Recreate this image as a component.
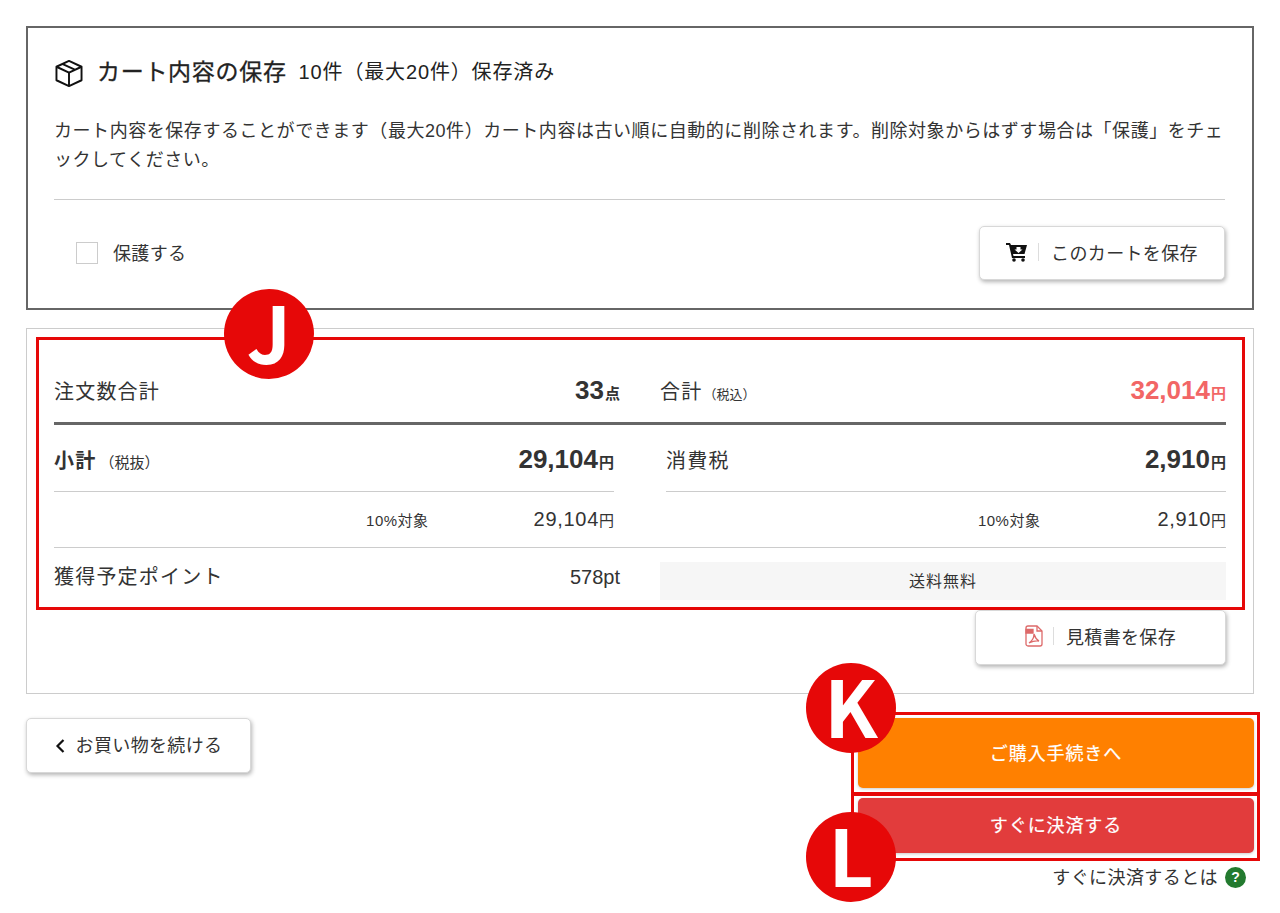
<script>
const taxRows = [
  { label: '10%対象', value: '29,104' },
  { label: '10%対象', value: '2,910' }
]
</script>

<div class="page">
  <section class="save">
    <h2 class="save-title">
      <svg class="box-icon" viewBox="1 1 28 28" fill="none" stroke="#111" stroke-width="2" stroke-linejoin="round">
        <path d="M15 2 28 8V22L15 28 2 22V8Z" />
        <path d="M2 8 15 14 28 8M15 14V28M8 5 21 11" />
      </svg>
      <span class="title-main">カート内容の保存</span>
      <span class="title-sub">10件（最大20件）保存済み</span>
    </h2>
    <p class="save-text">カート内容を保存することができます（最大20件）カート内容は古い順に自動的に削除されます。削除対象からはずす場合は「保護」をチェックしてください。</p>
    <div class="save-foot">
      <label class="protect"><span class="check"></span><span class="protect-text">保護する</span></label>
      <button class="btn btn-cart">
        <svg class="cart-icon" viewBox="0 0 22 20" fill="#111">
          <path d="M0 1H4L5 3H21L18.500 12H7L7.500 14H19V16H6L3 3H0Z" />
          <circle cx="8" cy="18" r="1.800" />
          <circle cx="17" cy="18" r="1.800" />
          <path d="M10.500 5H14.500V7.500H16.500L12.500 11 8.500 7.500H10.500Z" fill="#fff" />
        </svg>
        <span class="sep"></span>このカートを保存
      </button>
    </div>
  </section>

  <section class="summary">
    <div class="total-row">
      <div class="cell left">
        <span class="label">注文数合計</span>
        <span class="num-big">33<small>点</small></span>
      </div>
      <div class="cell right">
        <span class="label">合計<small class="note">（税込）</small></span>
        <span class="num-big pink">32,014<small>円</small></span>
      </div>
    </div>
    <div class="two-col">
      <div class="col">
        <div class="sub-row">
          <span class="label bold">小計<small class="note2">（税抜）</small></span>
          <span class="num-big">29,104<small>円</small></span>
        </div>
        <div class="tax-row">
          <span class="tax-label first">{taxRows[0].label}</span>
          <span class="tax-value">{taxRows[0].value}<small>円</small></span>
        </div>
      </div>
      <div class="col">
        <div class="sub-row">
          <span class="label">消費税</span>
          <span class="num-big">2,910<small>円</small></span>
        </div>
        <div class="tax-row">
          <span class="tax-label second">{taxRows[1].label}</span>
          <span class="tax-value">{taxRows[1].value}<small>円</small></span>
        </div>
      </div>
    </div>
    <div class="point-row">
      <div class="cell left">
        <span class="label">獲得予定ポイント</span>
        <span class="points">578pt</span>
      </div>
      <div class="free">送料無料</div>
    </div>
    <div class="quote-wrap">
      <button class="btn btn-quote">
        <svg class="pdf-icon" viewBox="0 0 18 22" fill="none" stroke="#dd6a6a" stroke-width="1.300">
          <path d="M3 1H12L17 6V19A2 2 0 0 1 15 21H3A2 2 0 0 1 1 19V3A2 2 0 0 1 3 1Z" />
          <path d="M12 1V6H17" />
          <path d="M1 4.500H8V8H1Z" fill="#dd6a6a" />
          <path d="M9 9C9 13 7 16 4 18 8 16 11 15.500 14 16 11.500 14.500 10 12.500 9 9Z" />
        </svg>
        <span class="sep"></span>見積書を保存
      </button>
    </div>
  </section>

  <div class="actions">
    <button class="btn btn-back">
      <svg class="chev" viewBox="0 0 10 16" fill="none" stroke="#111" stroke-width="2.200"><path d="M8.500 2 2.500 8l6 6" /></svg>
      お買い物を続ける
    </button>
    <div class="buy">
      <button class="buy-btn orange">ご購入手続きへ</button>
      <button class="buy-btn red">すぐに決済する</button>
      <div class="help"><span class="help-text">すぐに決済するとは</span><span class="q">?</span></div>
    </div>
  </div>

  <div class="mark-box box-j"></div>
  <div class="mark-box box-k"></div>
  <div class="mark-box box-l"></div>
  <div class="badge badge-j"><span>J</span></div>
  <div class="badge badge-k"><span>K</span></div>
  <div class="badge badge-l"><span>L</span></div>
</div>

<style>
  :global(body) {
    margin: 0;
    background: #fff;
    color: #333;
    font-family: "Liberation Sans", "Noto Sans CJK JP", sans-serif;
  }

  .page {
    position: relative;
    box-sizing: border-box;
    width: 1280px;
    height: 913px;
    padding: 26px 26px 0;
    overflow: hidden;
  }

  /* save box */
  .save {
    box-sizing: border-box;
    height: 284px;
    border: 2px solid #666;
    padding: 0 27px 0 26px;
  }
  .save-title {
    display: flex;
    align-items: center;
    margin: 0;
    padding-top: 27px;
    height: 30px;
    font-weight: 400;
    color: #222;
  }
  .box-icon {
    width: 28px;
    height: 27px;
    margin: 6px 14px 0 1px;
  }
  .title-main {
    font-size: 23px;
    letter-spacing: .7px;
    margin-right: 12px;
    -webkit-text-stroke: .3px #222;
  }
  .title-sub {
    font-size: 20px;
    letter-spacing: .85px;
  }
  .save-text {
    margin: 32px 0 0;
    font-size: 18px;
    line-height: 29px;
    letter-spacing: .55px;
    padding-bottom: 24px;
    border-bottom: 1px solid #ccc;
  }
  .save-foot {
    display: flex;
    align-items: center;
    justify-content: space-between;
    margin-top: 26px;
    height: 54px;
  }
  .protect {
    display: flex;
    align-items: center;
    margin-left: 22px;
    font-size: 18px;
    letter-spacing: .36px;
  }
  .protect-text { padding-bottom: 3px; }
  .check {
    box-sizing: border-box;
    width: 22px;
    height: 22px;
    border: 1px solid #ccc;
    margin-right: 15px;
  }

  .btn {
    display: flex;
    align-items: center;
    justify-content: center;
    box-sizing: border-box;
    background: #fff;
    border: 1px solid #d8d8d8;
    border-radius: 5px;
    box-shadow: 1px 2px 4px rgba(0, 0, 0, .3);
    color: #333;
    font-family: inherit;
    font-size: 18px;
    letter-spacing: .36px;
    padding: 0 0 3px;
  }
  .btn-cart {
    width: 246px;
    height: 54px;
  }
  .cart-icon {
    width: 22px;
    height: 20px;
  }
  .sep {
    width: 1px;
    height: 18px;
    background: #ddd;
    margin: 0 12px 0 10px;
  }

  /* summary */
  .summary {
    box-sizing: border-box;
    height: 366px;
    margin-top: 18px;
    border: 1px solid #ccc;
    padding: 0 27px;
  }
  .total-row {
    display: flex;
    justify-content: space-between;
    height: 96px;
    box-sizing: border-box;
    padding-top: 46px;
    border-bottom: 3px solid #666;
  }
  .cell {
    display: flex;
    justify-content: space-between;
    align-items: baseline;
    height: 40px;
  }
  .cell.left { width: 566px; }
  .cell.right { width: 566px; }
  .label {
    font-size: 20px;
    letter-spacing: 1.2px;
  }
  .label.bold { font-weight: 700; }
  .note {
    font-size: 13px;
    letter-spacing: 0;
    margin-left: 1px;
  }
  .note2 {
    font-size: 15px;
    font-weight: 400;
    letter-spacing: 0;
    margin-left: 3px;
  }
  .num-big {
    font-size: 26px;
    font-weight: 700;
  }
  .num-big small {
    font-size: 15px;
    margin-left: 1px;
  }
  .pink { color: #f26666; }

  .two-col {
    display: flex;
    justify-content: space-between;
    height: 122px;
    border-bottom: 1px solid #ccc;
  }
  .col { width: 560px; }
  .sub-row {
    display: flex;
    justify-content: space-between;
    align-items: baseline;
    box-sizing: border-box;
    height: 67px;
    padding-top: 19px;
    border-bottom: 1px solid #ccc;
  }
  .tax-row {
    display: flex;
    align-items: center;
    justify-content: flex-end;
    height: 55px;
    box-sizing: border-box;
  }
  .tax-label {
    font-size: 15px;
    letter-spacing: .5px;
  }
  .tax-label.first { margin-right: 105px; }
  .tax-label.second { margin-right: 117px; }
  .tax-value {
    font-size: 20px;
    letter-spacing: .7px;
  }
  .tax-value small {
    font-size: 15px;
    letter-spacing: 0;
  }

  .point-row {
    display: flex;
    justify-content: space-between;
    height: 63px;
    padding-top: 13px;
    box-sizing: border-box;
  }
  .point-row .cell { height: 30px; }
  .points { font-size: 20px; }
  .free {
    display: flex;
    align-items: center;
    justify-content: center;
    box-sizing: border-box;
    width: 566px;
    height: 38px;
    margin-top: 1px;
    padding-bottom: 3px;
    background: #f6f6f6;
    font-size: 16px;
    letter-spacing: 1px;
  }
  .quote-wrap {
    display: flex;
    justify-content: flex-end;
  }
  .btn-quote {
    width: 251px;
    height: 55px;
    margin-top: -1px;
  }
  .pdf-icon {
    width: 18px;
    height: 22px;
  }

  /* actions */
  .actions {
    display: flex;
    justify-content: space-between;
    align-items: flex-start;
    margin-top: 24px;
  }
  .btn-back {
    width: 225px;
    height: 55px;
  }
  .chev {
    width: 10px;
    height: 16px;
    margin: 3px 11px 0 0;
  }
  .buy {
    width: 396px;
    display: flex;
    flex-direction: column;
  }
  .buy-btn {
    border: 0;
    border-radius: 5px;
    color: #fff;
    font-family: inherit;
    font-size: 18px;
    letter-spacing: .9px;
    padding: 0 0 3px;
    -webkit-text-stroke: .2px #fff;
  }
  .orange {
    height: 70px;
    background: #ff8000;
    box-shadow: 0 1px 3px rgba(0, 0, 0, .2);
  }
  .red {
    height: 55px;
    margin-top: 10px;
    background: #e23c3c;
    box-shadow: 0 1px 3px rgba(0, 0, 0, .2);
  }
  .help {
    display: flex;
    align-items: center;
    justify-content: flex-end;
    margin-top: 10px;
    padding-right: 8px;
    font-size: 18px;
    letter-spacing: .42px;
  }
  .help-text { padding-bottom: 2px; }
  .q {
    display: flex;
    align-items: center;
    justify-content: center;
    width: 21px;
    height: 21px;
    margin-left: 7px;
    border-radius: 50%;
    background: #237a2f;
    color: #fff;
    font-size: 14px;
    font-weight: 700;
    letter-spacing: 0;
  }

  /* annotation overlays */
  .mark-box {
    position: absolute;
    box-sizing: border-box;
    border: 3px solid #e60808;
  }
  .box-j { left: 36px; top: 337px; width: 1209px; height: 273px; }
  .box-k { left: 851px; top: 712px; width: 409px; height: 83px; }
  .box-l { left: 851px; top: 793px; width: 409px; height: 68px; }
  .badge {
    position: absolute;
    display: flex;
    justify-content: center;
    width: 90px;
    height: 90px;
    border-radius: 50%;
    background: #e60808;
    color: #fff;
    font-family: "Noto Sans CJK JP", sans-serif;
    font-weight: 700;
    font-size: 78px;
    line-height: 82px;
  }
  .badge-j { left: 224px; top: 289px; }
  .badge-k { left: 806px; top: 663px; }
  .badge-l { left: 806px; top: 812px; }
</style>
